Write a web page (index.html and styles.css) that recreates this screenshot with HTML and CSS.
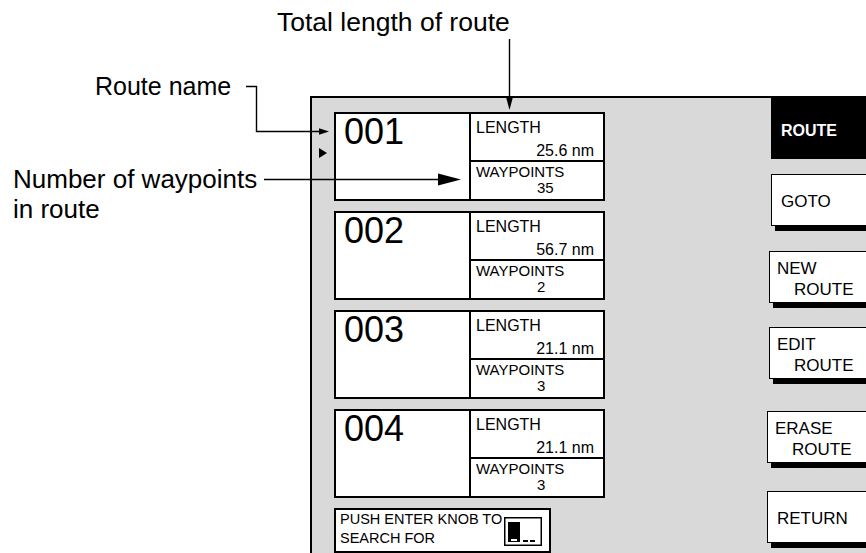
FILE: index.html
```html
<!DOCTYPE html>
<html>
<head>
<meta charset="utf-8">
<link rel="stylesheet" href="styles.css">
</head>
<body>
<div class="page">
  <div class="panel">
    <div class="list">
      <div class="card">
        <div class="name">001</div>
        <div class="stats">
          <div class="len"><div class="lbl">LENGTH</div><div class="val">25.6 nm</div></div>
          <div class="wp"><div class="lbl2">WAYPOINTS</div><div class="num">35</div></div>
        </div>
      </div>
      <div class="card">
        <div class="name">002</div>
        <div class="stats">
          <div class="len"><div class="lbl">LENGTH</div><div class="val">56.7 nm</div></div>
          <div class="wp"><div class="lbl2">WAYPOINTS</div><div class="num">2</div></div>
        </div>
      </div>
      <div class="card">
        <div class="name">003</div>
        <div class="stats">
          <div class="len"><div class="lbl">LENGTH</div><div class="val">21.1 nm</div></div>
          <div class="wp"><div class="lbl2">WAYPOINTS</div><div class="num">3</div></div>
        </div>
      </div>
      <div class="card">
        <div class="name">004</div>
        <div class="stats">
          <div class="len"><div class="lbl">LENGTH</div><div class="val">21.1 nm</div></div>
          <div class="wp"><div class="lbl2">WAYPOINTS</div><div class="num">3</div></div>
        </div>
      </div>
      <div class="search">
        <div class="search-text">PUSH ENTER KNOB TO<br>SEARCH FOR</div>
        <svg class="cursor" width="38" height="29" viewBox="0 0 38 29">
          <rect x="0.75" y="0.75" width="36.5" height="27.5" fill="#fff" stroke="#000" stroke-width="1.5"/>
          <rect x="4" y="5" width="12" height="20" fill="#000"/>
          <rect x="7" y="22" width="6" height="2" fill="#fff"/>
          <rect x="19" y="23" width="5" height="2" fill="#000"/>
          <rect x="26" y="23" width="5" height="2" fill="#000"/>
        </svg>
      </div>
    </div>
    <div class="keys">
      <div class="key key-active">ROUTE</div>
      <div class="key key-goto">GOTO</div>
      <div class="key key-new"><span>NEW</span><span class="indent">ROUTE</span></div>
      <div class="key key-edit"><span>EDIT</span><span class="indent">ROUTE</span></div>
      <div class="key key-erase"><span>ERASE</span><span class="indent">ROUTE</span></div>
      <div class="key key-return">RETURN</div>
    </div>
  </div>

  <div class="label label-total">Total length of route</div>
  <div class="label label-name">Route name</div>
  <div class="label label-wp">Number of waypoints<br>in route</div>

  <svg class="leaders" width="866" height="553" viewBox="0 0 866 553">
    <path d="M246 86.5 H256.5 V131.5 H321" fill="none" stroke="#000" stroke-width="1.4"/>
    <polygon points="329,131.5 319,128.3 319,134.7" fill="#000"/>
    <path d="M509.5 39 V100" fill="none" stroke="#000" stroke-width="1.4"/>
    <polygon points="509.5,110 506.3,98 512.7,98" fill="#000"/>
    <path d="M264 179.5 H440" fill="none" stroke="#000" stroke-width="1.4"/>
    <polygon points="461,179.5 438,173.5 438,185.5" fill="#000"/>
    <polygon points="319,148 327,153 319,158" fill="#000"/>
  </svg>
</div>
</body>
</html>
```

FILE: styles.css
```css
* { box-sizing: border-box; }
html, body { margin: 0; padding: 0; background: #fff; }
body {
  font-family: "Liberation Sans", Arial, sans-serif;
  color: #000;
}
.page {
  position: relative;
  width: 866px;
  height: 553px;
  overflow: hidden;
}
.panel {
  margin: 96px 0 0 310px;
  width: 556px;
  height: 457px;
  border-top: 2px solid #000;
  border-left: 2px solid #000;
  background: #d9d9d9;
  display: flex;
}
.list {
  padding: 14px 0 0 22px;
  display: flex;
  flex-direction: column;
  gap: 10px;
}
.card {
  width: 271px;
  height: 89px;
  border: 2px solid #000;
  background: #fff;
  display: flex;
}
.name {
  width: 133px;
  font-size: 36px;
  line-height: 36px;
  padding: 0 0 0 8px;
}
.stats {
  flex: 1;
  border-left: 2px solid #000;
  display: flex;
  flex-direction: column;
}
.len {
  height: 48px;
  border-bottom: 2px solid #000;
  padding: 5px 9px 0 5px;
}
.lbl {
  font-size: 16px;
  line-height: 17px;
}
.val {
  font-size: 16px;
  line-height: 17px;
  margin-top: 6px;
  text-align: right;
}
.wp {
  flex: 1;
  padding: 2px 0 0 5px;
  font-size: 15px;
  line-height: 16px;
}
.num {
  padding-left: 61px;
}
.search {
  width: 217px;
  height: 45px;
  border: 2px solid #000;
  background: #fff;
  display: flex;
  padding-left: 4px;
}
.search-text {
  width: 164px;
  font-size: 14.5px;
  line-height: 19px;
  white-space: nowrap;
}
.cursor {
  display: block;
  margin-top: 7px;
}
.keys {
  margin-left: auto;
  width: 95px;
  display: flex;
  flex-direction: column;
}
.key {
  width: 100px;
  height: 52px;
  background: #fff;
  border: 1.5px solid #000;
  box-shadow: 4px 5px 0 #000;
  font-size: 17px;
  line-height: 21px;
  padding: 3px 0 0 7px;
  display: flex;
  flex-direction: column;
  justify-content: center;
}
.key .indent { padding-left: 17px; }
.key-active {
  height: 63px;
  background: #000;
  color: #fff;
  font-weight: bold;
  font-size: 16px;
  box-shadow: none;
  padding: 6px 0 0 9px;
  margin-top: -2px;
}
.key-goto { margin-top: 15px; padding-left: 9px; }
.key-new { margin-top: 25px; margin-left: -2px; }
.key-edit { margin-top: 24px; margin-left: -2px; }
.key-erase { margin-top: 32px; margin-left: -4px; }
.key-return { margin-top: 28px; margin-left: -4px; padding-left: 9px; }

.label {
  position: absolute;
  font-size: 26.5px;
  line-height: 30px;
  white-space: nowrap;
}
.label-total { left: 277px; top: 7px; }
.label-name { left: 95px; top: 71px; font-size: 25px; }
.label-wp { left: 13px; top: 164px; font-size: 26px; }
.leaders {
  position: absolute;
  left: 0;
  top: 0;
  pointer-events: none;
}
```
